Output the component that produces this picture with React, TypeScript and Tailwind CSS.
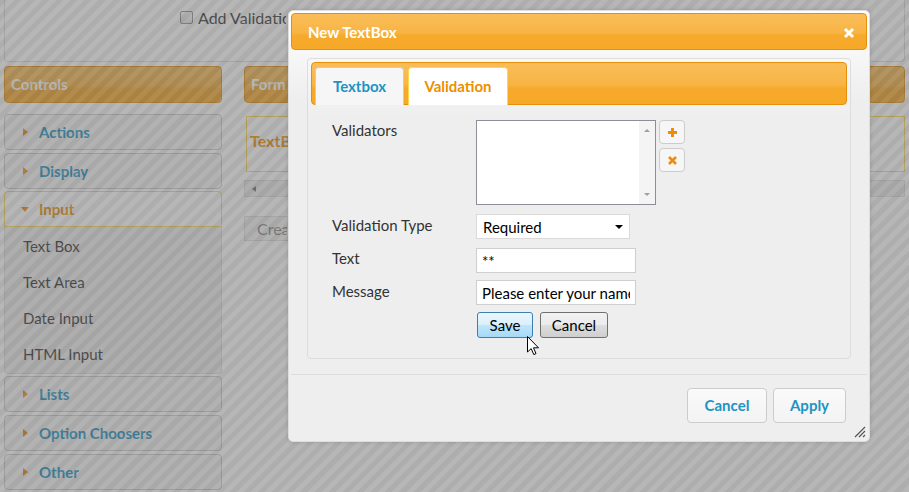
import React from "react"

const gloss = "bg-[linear-gradient(to_bottom,#f9bd58_0%,#f8b545_52%,#f6aa2c_62%,#f6a828_100%)]"

function TriRight() {
    return <span className="w-0 h-0 border-y-[4px] border-y-transparent border-l-[5px] border-l-[#ef8c08]" />
}

function TriDown() {
    return <span className="w-0 h-0 border-x-[4px] border-x-transparent border-t-[5px] border-t-[#ef8c08]" />
}

function AccHeader({ label, active }: { label: string; active?: boolean }) {
    return (
        <div
            className={
                active
                    ? "h-[36px] flex items-center pl-[12px] border border-[#fbd850] bg-white rounded-t-[4px] text-[#eb8f00] font-bold text-[15px]"
                    : "h-[36px] flex items-center pl-[12px] border border-[#cccccc] bg-[#f6f6f6] rounded-[4px] text-[#1c94c4] font-bold text-[15px]"
            }
        >
            <span className="w-[16px] flex justify-center">{active ? <TriDown /> : <TriRight />}</span>
            <span className="ml-[6px]">{label}</span>
        </div>
    )
}

function Sidebar() {
    return (
        <aside className="w-[218px] shrink-0">
            <div className={`h-[37px] flex items-center pl-[6px] border border-[#e78f08] rounded-[4px] ${gloss} text-white font-bold text-[15px]`}>
                Controls
            </div>
            <div className="mt-[11px] flex flex-col gap-[3px]">
                <AccHeader label="Actions" />
                <AccHeader label="Display" />
                <div className="-mt-[1px]">
                    <AccHeader label="Input" active />
                    <div className="border border-t-0 border-[#dddddd] bg-[#eeeeee] rounded-b-[4px] pt-[1px] pb-[1px] text-[#333333] text-[15px]">
                        {["Text Box", "Text Area", "Date Input", "HTML Input"].map((t) => (
                            <div key={t} className="h-[36px] flex items-center pl-[18px]">
                                {t}
                            </div>
                        ))}
                    </div>
                </div>
                <div className="-mt-[1px]">
                    <AccHeader label="Lists" />
                </div>
                <AccHeader label="Option Choosers" />
                <AccHeader label="Other" />
            </div>
        </aside>
    )
}

// the right part of the page sits under the dialog, so only its left edge shows
function MainArea() {
    return (
        <main className="flex-1">
            <div className={`h-[37px] flex items-center pl-[6px] border border-[#e78f08] rounded-[4px] ${gloss} text-white font-bold text-[15px]`}>
                <span className="w-[36px] overflow-hidden whitespace-nowrap">Form</span>
            </div>
            <div className="ml-[2px] mt-[13px] h-[56px] border border-[#fbd850] bg-white pl-[3px] pt-[12px] text-[#eb8f00] font-bold text-[16px]">
                <span className="block w-[38px] overflow-hidden whitespace-nowrap">TextBox</span>
            </div>
            <div className="mt-[8px] h-[17px] border border-[#dddddd] bg-[#eeeeee] flex items-center pl-[7px]">
                <span className="w-0 h-0 border-y-[3px] border-y-transparent border-r-[4px] border-r-[#777777]" />
            </div>
            <div className="mt-[19px] w-[120px] h-[25px] border border-[#dddddd] bg-[#f3f3f3] flex items-center pl-[12px] text-[#888888] text-[16px]">
                <span className="w-[30px] overflow-hidden whitespace-nowrap">Create</span>
            </div>
        </main>
    )
}

function OrangeIcon({ kind }: { kind: "plus" | "x" }) {
    return (
        <svg width="11" height="11" viewBox="0 0 11 11">
            {kind === "plus" ? (
                <path d="M5.5 1 V10 M1 5.5 H10" stroke="#ef8c08" strokeWidth="3" />
            ) : (
                <path d="M2 2 L9 9 M9 2 L2 9" stroke="#ef8c08" strokeWidth="2.6" />
            )}
        </svg>
    )
}

function Cursor() {
    return (
        <svg className="absolute left-[527px] top-[336px]" width="13" height="20" viewBox="0 0 13 20">
            <path d="M0.5 0.5 L0.5 16 L4.2 12.6 L6.8 18.6 L9 17.6 L6.5 11.8 L11.5 11.8 Z" fill="#ffffff" stroke="#000000" strokeWidth="1" strokeLinejoin="round" />
        </svg>
    )
}

function TextField({ value }: { value: string }) {
    return (
        <input
            readOnly
            value={value}
            className="w-[160px] h-[25px] border border-[#cfcfcf] bg-white px-[5px] text-[15px] text-black outline-none font-['Lato',sans-serif]"
        />
    )
}

function Dialog() {
    return (
        <div className="absolute left-[288px] top-[10px] w-[582px] h-[432px] border border-[#dddddd] rounded-[5px] p-[2px] flex flex-col bg-[linear-gradient(to_bottom,#ffffff_0px,#eeeeee_90px)] shadow-[0_0_4px_rgba(0,0,0,0.15)]">
            <div className={`h-[37px] shrink-0 flex items-center justify-between pl-[16px] pr-[11px] pt-[2px] border border-[#e78f08] rounded-[4px] ${gloss}`}>
                <span className="text-white font-bold text-[15px]">New TextBox</span>
                <svg width="12" height="12" viewBox="0 0 12 12">
                    <path d="M2 2 L10 10 M10 2 L2 10" stroke="#ffffff" strokeWidth="3" />
                </svg>
            </div>

            <div className="px-[16px] pt-[8px]">
                <div className="h-[301px] border border-[#dddddd] rounded-[4px] p-[3px] bg-[linear-gradient(to_bottom,#f8f8f8_0px,#eeeeee_60px)]">
                    <div className={`h-[43px] border border-[#e78f08] rounded-[4px] ${gloss} flex items-end gap-[4px] pl-[3px]`}>
                        <div className="w-[89px] h-[38px] -mb-[1px] border border-b-0 border-[#cccccc] rounded-t-[4px] bg-[#f6f6f6] flex items-center justify-center text-[#1c94c4] font-bold text-[15px]">
                            Textbox
                        </div>
                        <div className="w-[100px] h-[38px] -mb-[1px] border border-b-0 border-[#fbd850] rounded-t-[4px] bg-white flex items-center justify-center text-[#eb8f00] font-bold text-[15px]">
                            Validation
                        </div>
                    </div>

                    <div className="pl-[21px] pt-[15px] grid grid-cols-[144px_auto] gap-y-[9px] text-[15px] text-[#333333] leading-[20px]">
                        <div>Validators</div>
                        <div className="flex gap-[3px]">
                            <div className="w-[180px] h-[85px] border border-[#8c8f96] bg-white flex justify-end">
                                <div className="w-[16px] bg-[#f4f4f4] flex flex-col items-center justify-between py-[8px]">
                                    <span className="w-0 h-0 border-x-[3px] border-x-transparent border-b-[3px] border-b-[#a0a0a0]" />
                                    <span className="w-0 h-0 border-x-[3px] border-x-transparent border-t-[3px] border-t-[#a0a0a0]" />
                                </div>
                            </div>
                            <div className="flex flex-col gap-[4px]">
                                <div className="w-[26px] h-[24px] border border-[#cccccc] rounded-[4px] bg-[#f6f6f6] flex items-center justify-center">
                                    <OrangeIcon kind="plus" />
                                </div>
                                <div className="w-[26px] h-[24px] border border-[#cccccc] rounded-[4px] bg-[#f6f6f6] flex items-center justify-center">
                                    <OrangeIcon kind="x" />
                                </div>
                            </div>
                        </div>

                        <div className="pt-[1px]">Validation Type</div>
                        <div className="w-[154px] h-[25px] border border-[#dadada] bg-white flex items-center justify-between pl-[6px] pr-[6px] text-black">
                            <span>Required</span>
                            <span className="w-0 h-0 border-x-[4px] border-x-transparent border-t-[4px] border-t-black" />
                        </div>

                        <div>Text</div>
                        <TextField value="**" />

                        <div className="-mt-[2px] pt-[1px]">Message</div>
                        <div className="-mt-[2px]">
                            <TextField value="Please enter your name" />
                        </div>

                        <div />
                        <div className="-mt-[2px] flex gap-[7px] pl-[1px] text-black">
                            <div className="w-[56px] h-[26px] border border-[#3c7fb1] rounded-[3px] bg-[linear-gradient(to_bottom,#eaf6fd_0%,#d9f0fc_50%,#bee6fd_51%,#a7d9f5_100%)] flex items-center justify-center">
                                Save
                            </div>
                            <div className="w-[68px] h-[26px] border border-[#707070] rounded-[3px] bg-[linear-gradient(to_bottom,#f2f2f2_0%,#ebebeb_50%,#dddddd_51%,#cfcfcf_100%)] flex items-center justify-center">
                                Cancel
                            </div>
                        </div>
                    </div>
                </div>
            </div>

            <div className="mt-[15px] border-t border-[#dddddd] flex justify-end gap-[6px] pt-[13px] pr-[21px]">
                <div className="w-[80px] h-[35px] border border-[#cccccc] rounded-[4px] bg-[linear-gradient(to_bottom,#fafafa,#f3f3f3)] flex items-center justify-center text-[#1c94c4] font-bold text-[15px]">
                    Cancel
                </div>
                <div className="w-[73px] h-[35px] border border-[#cccccc] rounded-[4px] bg-[linear-gradient(to_bottom,#fafafa,#f3f3f3)] flex items-center justify-center text-[#1c94c4] font-bold text-[15px]">
                    Apply
                </div>
            </div>

            <svg className="absolute right-[3px] bottom-[3px]" width="13" height="13" viewBox="0 0 13 13">
                <path d="M12 2 L2 12 M12 6 L6 12 M12 10 L10 12" stroke="#555555" strokeWidth="1.2" />
            </svg>
        </div>
    )
}

export default function App() {
    return (
        <div className="relative w-[909px] h-[492px] overflow-hidden bg-white font-['Lato',sans-serif]">
            <div className="px-[4px]">
                <div className="h-[62px] border-x border-b border-[#dddddd] rounded-b-[4px] flex items-center gap-[5px] pl-[175px] pb-[26px] text-[#333333] text-[16px]">
                    <span className="w-[13px] h-[13px] shrink-0 border border-[#8e8f8f] rounded-[2px] bg-[linear-gradient(to_bottom,#ffffff,#e6e6e6)]" />
                    <span className="w-[88px] overflow-hidden whitespace-nowrap">Add Validation</span>
                </div>
                <div className="mt-[4px] flex gap-[22px]">
                    <Sidebar />
                    <MainArea />
                </div>
            </div>

            <div className="absolute inset-0 opacity-50 bg-[repeating-linear-gradient(135deg,#5c5c5c_0px,#5c5c5c_5px,#6e6e6e_5px,#6e6e6e_10px)]" />

            <Dialog />
            <Cursor />
        </div>
    )
}
